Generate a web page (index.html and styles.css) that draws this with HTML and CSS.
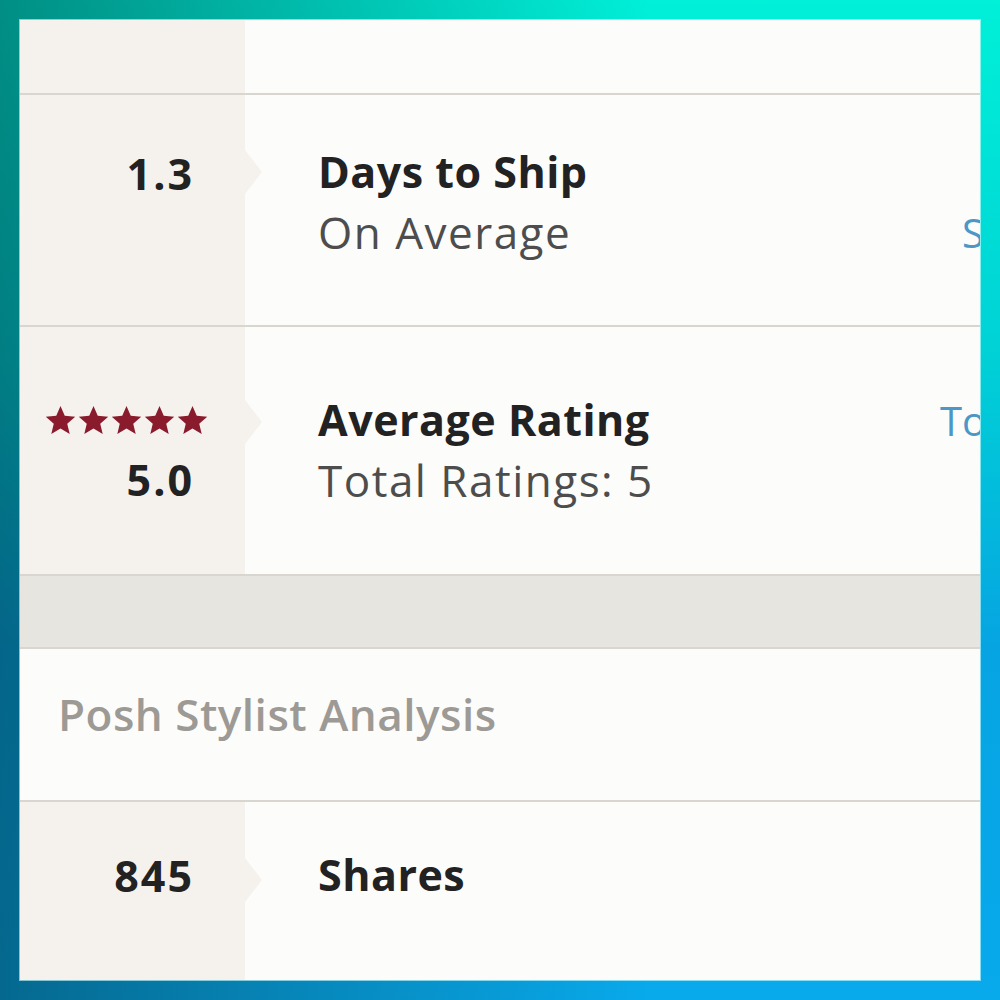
FILE: index.html
```html
<!DOCTYPE html>
<html lang="en">

<head>
  <meta charset="UTF-8">
  <meta name="viewport" content="width=device-width, initial-scale=1.0">
  <title>Closet Stats</title>
  <link rel="stylesheet" href="styles.css">
</head>

<body>
  <div class="panel">
    <div class="row row-top">
      <div class="side"></div>
      <div class="main"></div>
    </div>

    <div class="row row-ship">
      <div class="side">
        <span class="stat-number">1.3</span>
      </div>
      <div class="main">
        <div class="info">
          <div class="stat-title">Days to Ship</div>
          <div class="stat-sub">On Average</div>
        </div>
        <a class="stat-link link-low" href="#">See Details</a>
      </div>
    </div>

    <div class="row row-rating">
      <div class="side side-stack">
        <div class="stars">
          <svg viewBox="0 0 24 24"><path d="M12 1.5l3.1 7.1 7.6.7-5.8 5 1.8 7.5L12 17.8l-6.7 4 1.8-7.5-5.8-5 7.6-.7z" /></svg>
          <svg viewBox="0 0 24 24"><path d="M12 1.5l3.1 7.1 7.6.7-5.8 5 1.8 7.5L12 17.8l-6.7 4 1.8-7.5-5.8-5 7.6-.7z" /></svg>
          <svg viewBox="0 0 24 24"><path d="M12 1.5l3.1 7.1 7.6.7-5.8 5 1.8 7.5L12 17.8l-6.7 4 1.8-7.5-5.8-5 7.6-.7z" /></svg>
          <svg viewBox="0 0 24 24"><path d="M12 1.5l3.1 7.1 7.6.7-5.8 5 1.8 7.5L12 17.8l-6.7 4 1.8-7.5-5.8-5 7.6-.7z" /></svg>
          <svg viewBox="0 0 24 24"><path d="M12 1.5l3.1 7.1 7.6.7-5.8 5 1.8 7.5L12 17.8l-6.7 4 1.8-7.5-5.8-5 7.6-.7z" /></svg>
        </div>
        <span class="stat-number">5.0</span>
      </div>
      <div class="main">
        <div class="info">
          <div class="stat-title">Average Rating</div>
          <div class="stat-sub">Total Ratings: 5</div>
        </div>
        <a class="stat-link link-high" href="#">Total Reviews</a>
      </div>
    </div>

    <div class="band"></div>

    <div class="section-head">Posh Stylist Analysis</div>

    <div class="row row-shares">
      <div class="side">
        <span class="stat-number">845</span>
      </div>
      <div class="main">
        <div class="info">
          <div class="stat-title">Shares</div>
        </div>
      </div>
    </div>
  </div>
</body>

</html>
```

FILE: styles.css
```css
* {
  box-sizing: border-box;
  padding: 0;
  margin: 0;
}

html {
  font-family: 'Open Sans', 'Lato', sans-serif;
  color: #222222;
}

body {
  width: 1000px;
  height: 1000px;
  padding: 20px;
  overflow: hidden;
  background:
    linear-gradient(to right, rgba(0, 25, 30, 0.45), rgba(0, 25, 30, 0) 65%),
    linear-gradient(to bottom, #00f0d8 0%, #00d2d6 35%, #06a4e2 65%, #08aaec 100%);
}

.panel {
  width: 960px;
  height: 960px;
  overflow: hidden;
  background-color: #fcfcfa;
  box-shadow: 0 0 0 1px rgba(220, 255, 255, 0.6);
}

.row {
  display: grid;
  grid-template-columns: 225px 1fr;
  border-bottom: 2px solid #d9d6d0;
}

.side {
  position: relative;
  display: flex;
  align-items: center;
  justify-content: flex-end;
  padding-right: 51px;
  background-color: #f5f2ed;
}

/* little pointer from the beige column into the content */
.side::after {
  content: "";
  position: absolute;
  right: -17px;
  top: var(--arrow-top, 50%);
  margin-top: -22px;
  border-left: 17px solid #f5f2ed;
  border-top: 22px solid transparent;
  border-bottom: 22px solid transparent;
}

.row-top {
  height: 75px;
}

.row-top .side::after {
  display: none;
}

.row-ship {
  height: 232px;
}

.row-ship .side {
  padding-bottom: 72px;
  --arrow-top: 77px;
}

.row-ship .main {
  padding-bottom: 14px;
}

.row-rating {
  height: 249px;
}

.row-rating .side {
  --arrow-top: 95px;
}

.side-stack {
  flex-direction: column;
  align-items: flex-end;
  justify-content: center;
}

.stars {
  display: flex;
  align-items: center;
  height: 58px;
  margin-right: -15px;
}

.stars svg {
  width: 33px;
  height: 33px;
  fill: #8a1b2c;
}

.stat-number {
  font-size: 43px;
  font-weight: 700;
  line-height: 60px;
  letter-spacing: 2px;
  color: #222222;
}

.main {
  display: flex;
  align-items: center;
  padding-left: 73px;
  white-space: nowrap;
}

.info {
  width: 622px;
  flex-shrink: 0;
}

.stat-title {
  font-size: 43px;
  font-weight: 700;
  line-height: 58px;
  letter-spacing: 0.5px;
  color: #222222;
}

.stat-sub {
  font-size: 44px;
  line-height: 62px;
  letter-spacing: 1.5px;
  color: #4d4d4d;
}

.stat-link {
  font-size: 40px;
  color: #4c97c6;
  text-decoration: none;
}

.link-low {
  margin-left: 22px;
  margin-top: 58px;
}

.link-high {
  margin-bottom: 60px;
}

.band {
  height: 73px;
  background-color: #e7e5e0;
  border-bottom: 2px solid #d9d6d0;
}

.section-head {
  height: 153px;
  padding-left: 38px;
  padding-bottom: 22px;
  display: flex;
  align-items: center;
  border-bottom: 2px solid #d9d6d0;
  font-size: 44px;
  font-weight: 600;
  letter-spacing: 0.5px;
  color: #9d9a95;
}

.row-shares {
  height: 200px;
  border-bottom: none;
}

.row-shares .side {
  align-items: flex-start;
  padding-top: 44px;
  --arrow-top: 78px;
}

.row-shares .main {
  align-items: flex-start;
  padding-top: 44px;
}
```
